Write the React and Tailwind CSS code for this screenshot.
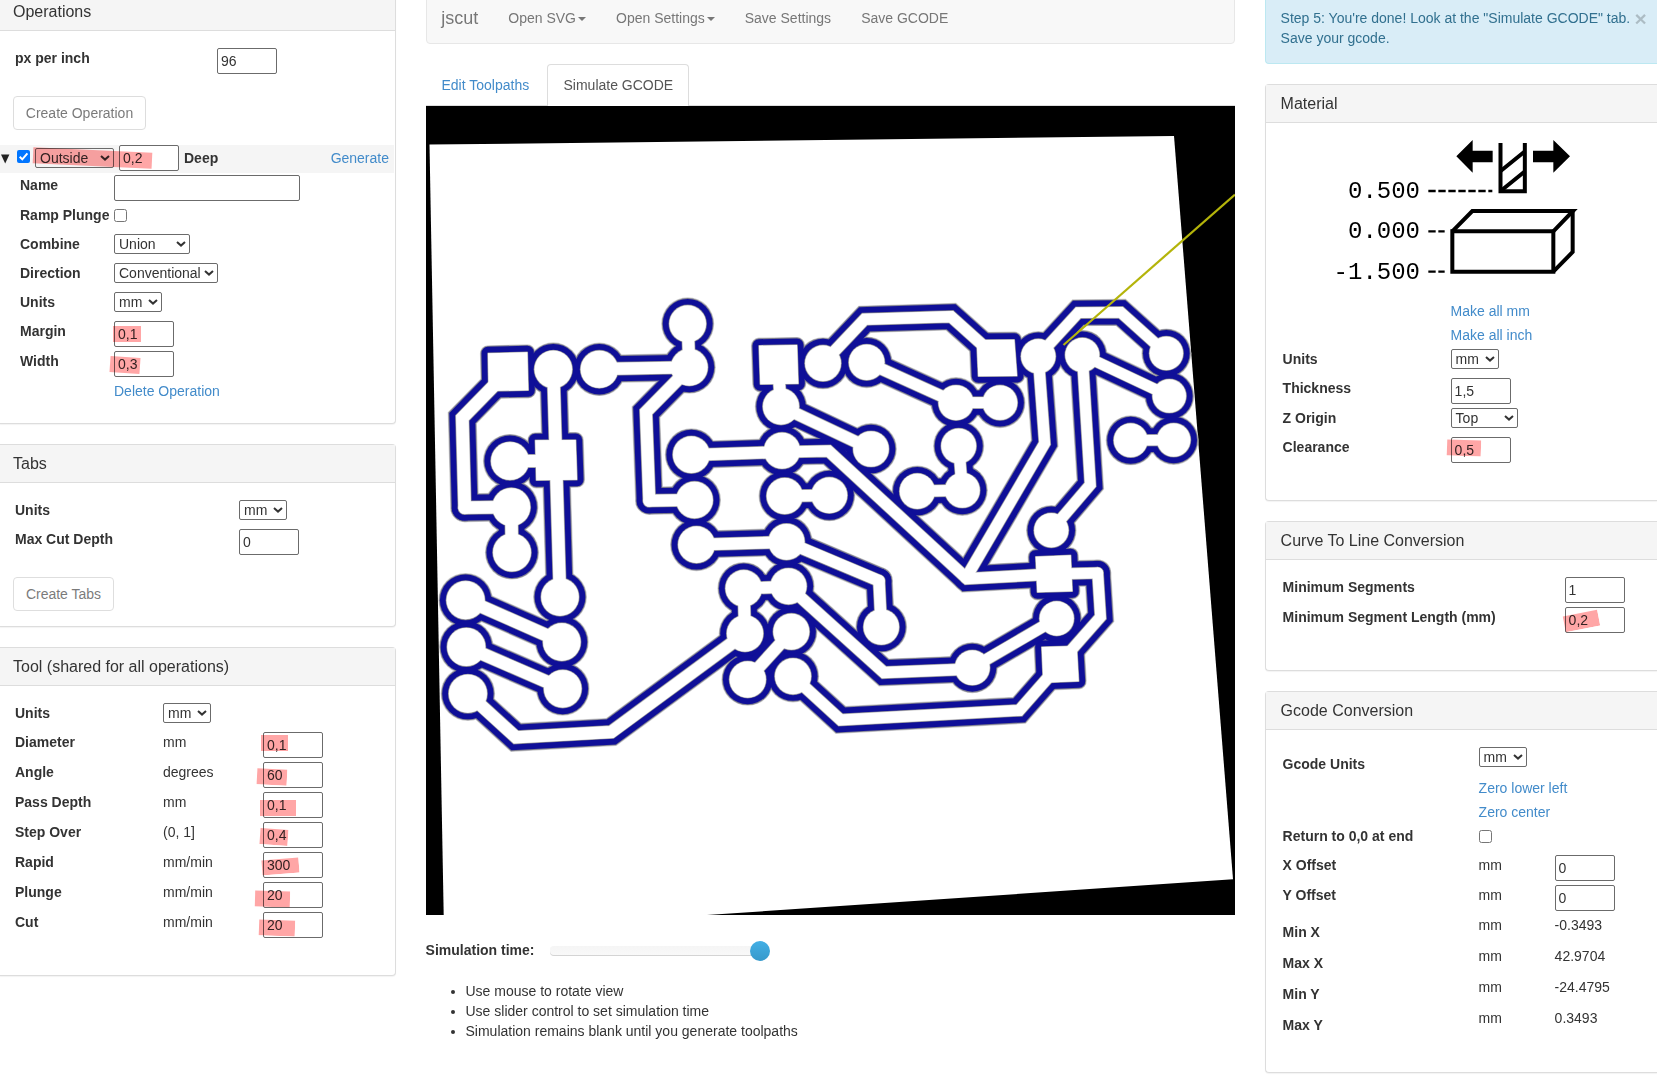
import React from "react";

function Panel({ title, className, side = "left", children }) {
  const edge = side === "left" ? "border-r rounded-r" : "border-l rounded-l";
  const pad = side === "left" ? "pl-[13px]" : "pl-[14.6px]";
  return (
    <section className={`border-y border-[#ddd] bg-white shadow-[0_1px_1px_rgba(0,0,0,0.05)] ${edge} ${className}`}>
      <h3 className={`flex h-[38px] items-center border-b border-[#ddd] bg-[#f5f5f5] text-[16px] leading-[18px] ${pad}`}>
        {title}
      </h3>
      {children}
    </section>
  );
}

function Row({ className = "h-[30px]", children }) {
  return <div className={`flex items-start ${className}`}>{children}</div>;
}

function Label({ className, children }) {
  return <label className={`shrink-0 whitespace-nowrap font-bold ${className}`}>{children}</label>;
}

function Field({ value = "", mark, width = "w-[60px]" }) {
  return (
    <span className={`relative block h-[26px] shrink-0 ${width}`}>
      <input
        type="text"
        defaultValue={value}
        className="block h-[26px] w-full rounded-[2px] border border-[#6b6b6b] bg-white pl-[3px] text-[14px] leading-5 text-[#333]"
      />
      {mark && <span className={`absolute bg-[#ffa6a6] mix-blend-multiply ${mark}`} />}
    </span>
  );
}

function Select({ value, width = "w-12", clear }) {
  return (
    <span
      className={`flex h-5 shrink-0 items-center justify-between rounded-[2px] border border-[#6b6b6b] pl-1 pr-[3px] leading-[18px] ${width} ${clear ? "" : "bg-white"}`}
    >
      {value}
      <svg viewBox="0 0 10 6" className="h-1.5 w-2.5">
        <path d="M1 1 L5 4.6 L9 1" fill="none" stroke="#333" strokeWidth="2" />
      </svg>
    </span>
  );
}

function Checkbox({ checked }) {
  if (checked) {
    return (
      <span className="block size-[13px] shrink-0 rounded-[2px] bg-[#0075ff]">
        <svg viewBox="0 0 13 13" className="size-[13px]">
          <path d="M2.7 6.8 L5.3 9.4 L10.4 3.4" fill="none" stroke="#fff" strokeWidth="2" />
        </svg>
      </span>
    );
  }
  return <span className="block size-[13px] shrink-0 rounded-[2.5px] border border-[#767676] bg-white" />;
}

function Link({ children, className = "" }) {
  return <a className={`whitespace-nowrap text-[#428bca] ${className}`}>{children}</a>;
}

function DisabledButton({ children, className }) {
  return (
    <button className={`block h-[34px] rounded border border-[#ccc] bg-white text-center text-[#333] opacity-65 ${className}`}>
      {children}
    </button>
  );
}

/* ---------- simulated board ---------- */

const pads = [
  [687.7, 323.8], [689.3, 367.3], [599.3, 369.3], [553.3, 369.3], [510, 461], [511.3, 507],
  [512, 552.5], [691.3, 454.7], [694.5, 500], [696.5, 544.7], [560, 597], [561.8, 642],
  [562.7, 688.8], [465.6, 600.2], [466.3, 647], [467.9, 693.7], [743.7, 588.3], [788.5, 586.3],
  [745, 633.5], [791.3, 631.7], [747.7, 679.5], [793, 676.3], [786.5, 541.8], [823, 363.3],
  [866.7, 362.3], [781, 406.5], [871, 449], [782, 450.7], [784.7, 496], [829.3, 495.3],
  [956, 402.7], [1000, 402.7], [958.7, 446], [962.3, 490.3], [917.3, 491.2], [1038.3, 356.3],
  [1082.3, 355], [1166.3, 353.3], [1169.3, 396], [1173.7, 440], [1130.7, 440.3], [1051.3, 530.3],
  [881.3, 627], [972.3, 667.7], [1056.7, 618.5],
];

const squares = [
  "488,353.3 527.3,352.3 528.3,390.3 488.7,391",
  "759,345.7 797,345 798.3,383.7 760.3,384.3",
  "976.7,340 1014.3,339.7 1017,376 978.3,376.3",
  "535.3,440.3 575.7,440 577,479.7 536.3,480.3",
  "1035.7,556.7 1070.7,555.3 1072.3,591.3 1037.3,592.3",
  "1041.7,647 1076.7,646 1078.7,681.3 1043.3,682.7",
];

const traces = [
  [[506, 373.3], [462.3, 418], [464.7, 507.7]],
  [[464.7, 507.7], [511, 507]],
  [[511.3, 507], [512, 552.5]],
  [[599.3, 369], [689.3, 367.3]],
  [[687.7, 323.8], [689.3, 367.3]],
  [[689.3, 368], [646, 412], [649.3, 500.7]],
  [[649.3, 500.7], [694.5, 500]],
  [[553.3, 369.3], [560, 597.3]],
  [[510, 461], [556, 461]],
  [[466.1, 599.7], [561.8, 642]],
  [[466.6, 647], [562.9, 688.8]],
  [[468.2, 693.7], [516, 737.3], [611.3, 732], [745, 633.5]],
  [[743.7, 588.3], [788.5, 586.8]],
  [[743.7, 588.3], [745, 633.5]],
  [[791.3, 631.7], [747.7, 679.5]],
  [[691.3, 455], [782, 452]],
  [[782, 452], [828.5, 451], [967, 578.7], [1055, 574]],
  [[1038.3, 356.3], [1044.7, 443.3], [966, 578]],
  [[696.5, 544.7], [786.5, 542]],
  [[786.5, 541.8], [879, 580.8]],
  [[879, 580.8], [881.3, 627]],
  [[788.5, 586.3], [884, 672.5], [972.3, 669]],
  [[972.3, 667.7], [1056.7, 618.5]],
  [[793, 676.3], [840.7, 720], [1019.3, 710.3], [1060, 664]],
  [[1055, 574], [1097.7, 573]],
  [[1097.7, 573], [1100.5, 617], [1067, 655]],
  [[779, 380], [781, 406.5]],
  [[781, 406.5], [871, 449]],
  [[784.7, 496], [829.3, 495.3]],
  [[823, 363.3], [864.7, 319.3], [951, 316.7], [997, 358]],
  [[866.7, 362.3], [956, 402.7]],
  [[956, 402.7], [1000, 402.7]],
  [[958.7, 446], [962.3, 490.3]],
  [[917.3, 491.2], [962.3, 490.3]],
  [[1038.3, 356.3], [1078.3, 312.7], [1120.7, 312.3], [1166.3, 353.3]],
  [[1082.3, 355], [1169.3, 396]],
  [[1082.3, 355], [1090.3, 484.7], [1051.3, 530.3]],
  [[1130.7, 440.3], [1173.7, 440]],
];

/* The view is slightly tilted, so features shrink toward the right. */
const tilt = (x) => 1.05 - (x - 460) * 0.000155;

/* grow = distance from the copper edge centre line, outward positive */
function CopperLayer({ color, grow }) {
  return (
    <g fill={color} stroke={color}>
      {pads.map(([x, y], i) => (
        <circle key={i} cx={x} cy={y} r={21.7 * tilt(x) + grow} stroke="none" />
      ))}
      {squares.map((points, i) => (
        <polygon key={i} points={points} strokeWidth={Math.max(0, 2 * (grow + 3.6))} strokeLinejoin="round" />
      ))}
      {traces.map((pts, i) => {
        const mean = pts.reduce((sum, p) => sum + p[0], 0) / pts.length;
        return (
          <polyline
            key={i}
            points={pts.map((p) => p.join(",")).join(" ")}
            fill="none"
            strokeWidth={2 * (9.5 * tilt(mean) + grow)}
            strokeLinecap="round"
            strokeLinejoin="miter"
          />
        );
      })}
    </g>
  );
}

function BoardView() {
  return (
    <svg viewBox="426 106 809 809" className="block size-[809px]">
      <rect x="426" y="106" width="809" height="809" fill="#000" />
      <polygon points="429.5,144.6 1174,135.9 1233,879.3 707,915 443.7,915" fill="#fff" />
      <CopperLayer color="#cfcfcf" grow={4.5} />
      <CopperLayer color="#7c7c8c" grow={3.8} />
      <CopperLayer color="#0f0f98" grow={2.9} />
      <CopperLayer color="#7c7c8c" grow={-2.8} />
      <CopperLayer color="#cfcfcf" grow={-3.4} />
      <CopperLayer color="#fff" grow={-3.8} />
      <line x1="1063.5" y1="345" x2="1235" y2="194.5" stroke="#b4b40a" strokeWidth="2.2" />
    </svg>
  );
}

function MaterialDiagram() {
  return (
    <svg viewBox="195 405 765 450" className="block h-[150px] w-[255px]">
      <g fontFamily="'Liberation Mono', monospace" fontSize="72" textAnchor="end" fill="#000">
        <text x="480" y="595">0.500</text>
        <text x="480" y="715">0.000</text>
        <text x="480" y="837">-1.500</text>
      </g>
      <g stroke="#000" strokeWidth="7" strokeDasharray="22 8">
        <line x1="505" y1="573" x2="697" y2="573" />
        <line x1="505" y1="694" x2="554" y2="694" />
        <line x1="505" y1="815" x2="554" y2="815" />
      </g>
      <path d="M589 469 L638 420 V452 H698 V487 H638 V518 Z" />
      <path d="M930 469 L880 420 V452 H819 V487 H880 V518 Z" />
      <g fill="none" stroke="#000" strokeWidth="12">
        <path d="M721.500 429 V574 H794.500 V429" />
        <path d="M722 513 L795 454 M722 573 L795 514" />
        <path d="M577 694 H880 V815 H577 Z" />
        <path d="M577 694 L637 633 H939 L880 694" />
        <path d="M938 628 V756 L880 815" />
      </g>
    </svg>
  );
}

const toolRows = [
  ["Diameter", "mm", "0,1", "-left-0.5 top-[3px] h-4 w-[27px]"],
  ["Angle", "degrees", "60", "-left-[6px] top-[7px] h-4 w-[30px] rotate-3"],
  ["Pass Depth", "mm", "0,1", "-left-[3px] top-2 h-4 w-9"],
  ["Step Over", "(0, 1]", "0,4", "-left-[3px] top-[7px] h-4 w-7 rotate-[4deg]"],
  ["Rapid", "mm/min", "300", "-left-px top-[7px] h-[15px] w-[37px] -rotate-[4.5deg]"],
  ["Plunge", "mm/min", "20", "-left-2 top-[9px] h-4 w-[35px] rotate-[1.5deg]"],
  ["Cut", "mm/min", "20", "-left-1 top-2 h-4 w-9 rotate-2"],
];

const extents = [
  ["Min X", "-0.3493"],
  ["Max X", "42.9704"],
  ["Min Y", "-24.4795"],
  ["Max Y", "0.3493"],
];

function LeftColumn() {
  return (
    <div className="flex w-[396px] shrink-0 flex-col gap-5">
      <Panel title="Operations" className="-mt-2 h-[432px]">
        <Row className="mt-[17px] h-12 pl-[15px]">
          <Label className="w-[202px]">px per inch</Label>
          <Field value="96" />
        </Row>
        <DisabledButton className="ml-[13px] w-[133px]">Create Operation</DisabledButton>
        <div className="mr-px mt-[15px] flex h-[28px] bg-[#f5f5f5]">
          <svg viewBox="0 0 9 10" className="ml-[1px] mt-[9px] h-2.5 w-[9px]">
            <path d="M0 0.500 H8.400 L4.200 9.500 Z" fill="#222" />
          </svg>
          <span className="ml-[7px] mt-[5px]">
            <Checkbox checked />
          </span>
          <span className="relative ml-[5px] mt-[3px]">
            <Select value="Outside" width="w-[79px]" clear />
          </span>
          <span className="ml-[5px]">
            <Field value="0,2" mark="-left-[86px] top-[5px] h-4 w-[119px] rotate-[2.7deg]" />
          </span>
          <Label className="ml-[5px] mt-[3px]">Deep</Label>
          <Link className="ml-auto mr-[5px] mt-[3px]">Generate</Link>
        </div>
        <div className="mt-[2px] pl-5">
          <Row>
            <Label className="w-[94px]">Name</Label>
            <Field width="w-[186px]" />
          </Row>
          <Row className="h-[29px]">
            <Label className="w-[94px]">Ramp Plunge</Label>
            <span className="mt-1">
              <Checkbox />
            </span>
          </Row>
          <Row className="h-[29px]">
            <Label className="w-[94px]">Combine</Label>
            <Select value="Union" width="w-[76px]" />
          </Row>
          <Row className="h-[29px]">
            <Label className="w-[94px]">Direction</Label>
            <Select value="Conventional" width="w-[104px]" />
          </Row>
          <Row className="h-[29px]">
            <Label className="w-[94px]">Units</Label>
            <Select value="mm" />
          </Row>
          <Row>
            <Label className="w-[94px]">Margin</Label>
            <Field value="0,1" mark="-left-px top-[5px] h-4 w-7" />
          </Row>
          <Row>
            <Label className="w-[94px]">Width</Label>
            <Field value="0,3" mark="-left-1 top-[6px] h-4 w-[30px] rotate-[4deg]" />
          </Row>
          <Link className="ml-[94px]">Delete Operation</Link>
        </div>
      </Panel>

      <Panel title="Tabs" className="h-[183px]">
        <div className="pl-[15px] pt-[17px]">
          <Row className="h-[29px]">
            <Label className="w-[224px]">Units</Label>
            <Select value="mm" />
          </Row>
          <Row className="h-12">
            <Label className="w-[224px]">Max Cut Depth</Label>
            <Field value="0" />
          </Row>
        </div>
        <DisabledButton className="ml-[13px] w-[101px]">Create Tabs</DisabledButton>
      </Panel>

      <Panel title="Tool (shared for all operations)" className="h-[329px]">
        <div className="pl-[15px] pt-[17px]">
          <Row className="h-[29px]">
            <Label className="w-[148px]">Units</Label>
            <Select value="mm" />
          </Row>
          {toolRows.map(([name, unit, value, mark]) => (
            <Row key={name}>
              <Label className="w-[148px]">{name}</Label>
              <span className="w-[100px]">{unit}</span>
              <Field value={value} mark={mark} />
            </Row>
          ))}
        </div>
      </Panel>
    </div>
  );
}

function Caret() {
  return <span className="ml-0.5 inline-block border-x-4 border-t-4 border-x-transparent border-t-[#777] align-middle" />;
}

function CenterColumn() {
  return (
    <main className="ml-[30px] w-[809px] shrink-0">
      <nav className="-mt-1.5 flex h-[50px] items-center rounded border border-[#e7e7e7] bg-[#f8f8f8] pb-0.5 pl-[14.3px] text-[#777]">
        <span className="w-[67px] text-[18px] leading-5">jscut</span>
        <span className="mr-[30px]">Open SVG<Caret /></span>
        <span className="mr-[30px]">Open Settings<Caret /></span>
        <span className="mr-[30px]">Save Settings</span>
        <span>Save GCODE</span>
      </nav>
      <div className="mt-5 flex h-[42px] border-b border-[#ddd]">
        <a className="w-[121px] pl-[15.5px] pt-[11px] text-[#428bca]">Edit Toolpaths</a>
        <a className="h-[42px] w-[142px] rounded-t border border-b-0 border-[#ddd] bg-white pl-[15.5px] pt-[10px] text-[#555]">
          Simulate GCODE
        </a>
      </div>
      <BoardView />
      <div className="mt-[25px] flex h-5 items-center">
        <span className="-ml-[0.4px] w-[124.4px] font-bold">Simulation time:</span>
        <span className="relative mt-0.5 block h-2.5 w-[210px] rounded bg-gradient-to-b from-[#f5f5f5] to-[#f9f9f9] shadow-[inset_0_-1px_0_rgba(0,0,0,0.15)]">
          <span className="absolute -right-2.5 -top-[5px] size-5 rounded-full bg-gradient-to-b from-[#43afe5] to-[#3699cb]" />
        </span>
      </div>
      <ul className="mt-[21px] list-disc pl-[39.5px]">
        <li>Use mouse to rotate view</li>
        <li>Use slider control to set simulation time</li>
        <li>Simulation remains blank until you generate toolpaths</li>
      </ul>
    </main>
  );
}

function RightColumn() {
  return (
    <div className="ml-[30px] flex w-[392px] shrink-0 flex-col gap-5">
      <div className="-mt-2 flex h-[72px] rounded-l border-y border-l border-[#bce8f1] bg-[#d9edf7] pl-[14.6px] pt-[15px] text-[#31708f]">
        <p className="w-[354px]">
          Step 5: You're done! Look at the "Simulate GCODE" tab.
          <br />
          Save your gcode.
        </p>
        <span className="text-[21px] font-bold leading-[21px] text-black opacity-20">×</span>
      </div>

      <Panel side="right" title="Material" className="h-[417px]">
        <div className="pl-[59px] pt-3">
          <MaterialDiagram />
        </div>
        <div className="pl-[16.6px] pt-4">
          <Row className="h-6 pl-[168px]">
            <Link>Make all mm</Link>
          </Row>
          <Row className="h-6 pl-[168px]">
            <Link>Make all inch</Link>
          </Row>
          <Row className="h-[29px]">
            <Label className="w-[168px]">Units</Label>
            <Select value="mm" />
          </Row>
          <Row>
            <Label className="w-[168px]">Thickness</Label>
            <Field value="1,5" />
          </Row>
          <Row className="h-[29px]">
            <Label className="w-[168px]">Z Origin</Label>
            <Select value="Top" width="w-[67px]" />
          </Row>
          <Row>
            <Label className="w-[168px]">Clearance</Label>
            <Field value="0,5" mark="-left-1 top-[3px] h-4 w-[34px] rotate-2" />
          </Row>
        </div>
      </Panel>

      <Panel side="right" title="Curve To Line Conversion" className="h-[150px]">
        <div className="pl-[16.6px] pt-[17px]">
          <Row>
            <Label className="w-[282px]">Minimum Segments</Label>
            <Field value="1" />
          </Row>
          <Row>
            <Label className="w-[282px]">Minimum Segment Length (mm)</Label>
            <Field value="0,2" mark="-left-px top-[6px] h-4 w-[35px] -rotate-[11deg]" />
          </Row>
        </div>
      </Panel>

      <Panel side="right" title="Gcode Conversion" className="h-[382px]">
        <div className="pl-[16.6px] pt-[17px]">
          <Row className="h-[31px]">
            <Label className="mt-[7px] w-[196px]">Gcode Units</Label>
            <Select value="mm" />
          </Row>
          <Row className="h-6 pl-[196px]">
            <Link>Zero lower left</Link>
          </Row>
          <Row className="h-6 pl-[196px]">
            <Link>Zero center</Link>
          </Row>
          <Row className="h-[29px]">
            <Label className="w-[196px]">Return to 0,0 at end</Label>
            <span className="mt-1">
              <Checkbox />
            </span>
          </Row>
          {["X Offset", "Y Offset"].map((name) => (
            <Row key={name}>
              <Label className="w-[196px]">{name}</Label>
              <span className="w-[76px]">mm</span>
              <Field value="0" />
            </Row>
          ))}
          {extents.map(([name, value]) => (
            <Row key={name} className="h-[31px]">
              <Label className="mt-[7px] w-[196px]">{name}</Label>
              <span className="w-[76px]">mm</span>
              <span>{value}</span>
            </Row>
          ))}
        </div>
      </Panel>
    </div>
  );
}

export default function App() {
  return (
    <div className="flex h-[1078px] w-[1657px] items-start overflow-hidden bg-white font-['Liberation_Sans',Arial,sans-serif] text-[14px] leading-5 text-[#333]">
      <LeftColumn />
      <CenterColumn />
      <RightColumn />
    </div>
  );
}
